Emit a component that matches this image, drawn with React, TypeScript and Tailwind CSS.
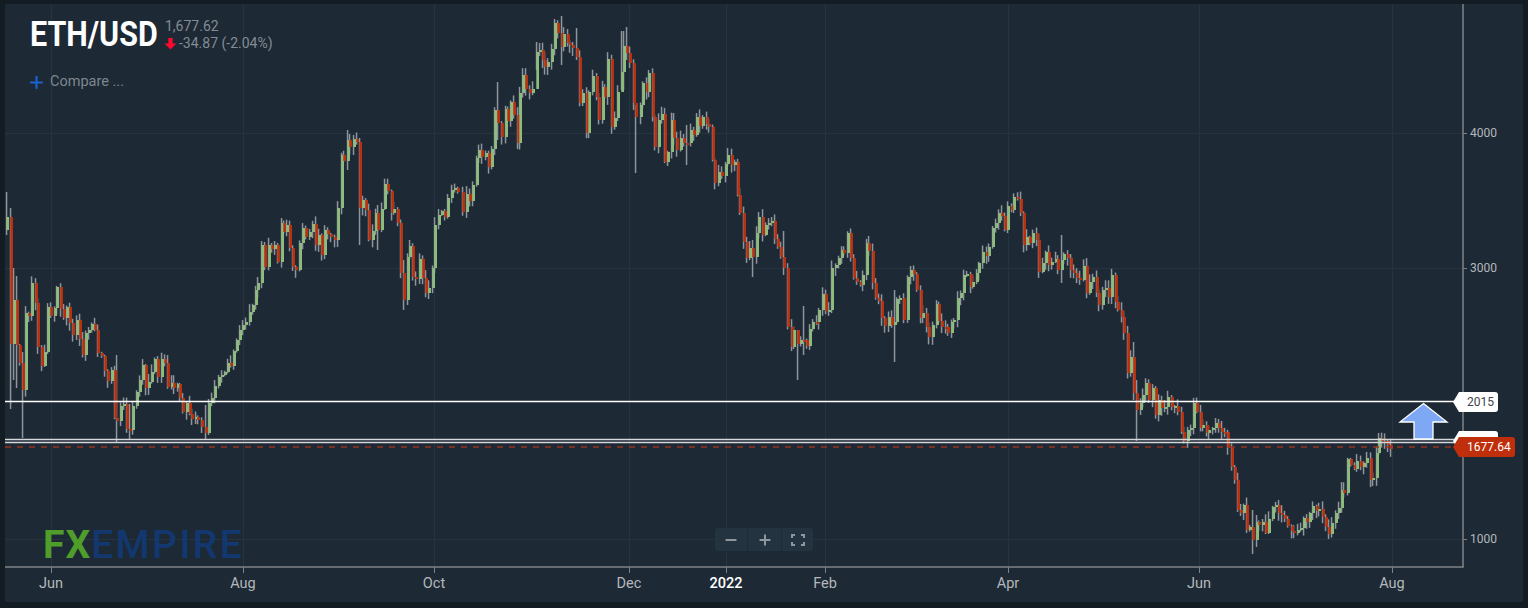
import { Minus, Plus } from "lucide-react";

// close of each candle in screen coords: "x,y"
const closes = `7,217 11,344 14,300 17,345 20,363 23,390 26,313 29,316 32,283 36,303 38,347 42,366 45,352 48,307 51,316 55,308 57,287 61,309 64,318 67,307 70,323 73,335 77,320 80,339 83,355 86,333 89,330 92,324 95,330 98,353 102,356 105,371 108,381 112,370 115,418 117,421 121,406 124,404 127,429 130,430 133,406 137,392 140,380 143,365 146,388 149,382 152,372 155,359 158,377 162,359 165,363 168,387 172,383 174,388 178,384 180,398 183,412 187,403 190,414 192,419 196,417 198,420 202,427 206,433 209,403 212,398 215,386 219,377 222,375 225,372 228,363 231,366 234,351 237,340 240,330 243,325 246,322 250,312 253,305 256,290 258,283 262,245 265,267 269,245 272,249 275,245 278,262 282,223 284,232 287,225 290,248 293,267 296,270 300,243 303,228 306,237 310,232 313,224 316,245 319,235 322,255 325,230 328,234 331,237 335,240 338,208 342,155 344,161 348,140 350,147 354,139 357,142 360,208 363,200 366,210 369,240 373,231 376,213 378,230 382,209 385,184 388,191 392,213 394,209 398,223 401,273 404,300 408,257 410,246 413,277 416,279 420,259 423,278 426,293 429,288 433,268 435,225 439,215 442,211 445,217 448,198 452,190 455,188 458,192 463,212 467,194 470,201 473,185 477,158 479,150 482,157 486,153 489,167 492,149 495,110 498,123 502,137 506,109 508,121 511,102 514,115 518,143 520,93 523,75 526,89 530,93 533,89 537,52 540,50 543,60 545,67 548,62 552,49 555,23 558,33 562,47 564,34 568,43 570,45 573,48 577,57 580,103 583,93 587,133 589,92 593,76 597,97 599,120 603,87 605,97 608,59 612,127 615,118 618,92 622,72 624,46 627,53 630,63 634,103 636,117 641,105 643,83 647,92 649,73 653,117 655,147 659,120 662,114 665,162 668,152 672,120 674,138 677,150 681,138 684,143 687,143 691,130 694,135 697,117 700,126 703,117 707,124 709,127 713,160 715,183 719,172 722,176 726,164 728,155 732,165 735,162 738,195 740,213 744,242 747,258 750,248 753,257 757,233 759,217 763,235 766,225 769,223 772,221 775,239 778,247 781,257 784,268 788,327 792,347 794,330 798,344 801,340 804,340 807,346 810,329 813,322 817,322 819,310 823,294 826,311 829,310 832,268 836,265 839,258 842,250 844,253 848,233 851,258 854,278 857,282 861,285 863,275 867,243 869,251 873,283 876,298 879,301 882,318 885,326 889,317 892,325 895,322 897,299 900,298 904,320 908,277 911,270 914,274 917,290 921,318 923,313 927,327 929,337 933,325 937,304 939,321 942,327 946,327 948,333 952,322 954,320 958,298 961,293 964,275 967,274 971,287 973,282 977,273 979,263 983,252 987,256 989,247 993,228 996,223 999,213 1002,216 1005,230 1008,206 1012,210 1014,197 1018,199 1021,213 1024,245 1027,237 1030,243 1033,233 1037,240 1039,272 1043,263 1046,252 1049,265 1052,262 1056,259 1058,270 1062,260 1064,254 1068,258 1071,270 1074,273 1077,278 1080,280 1084,266 1087,293 1090,282 1093,277 1097,293 1099,305 1103,290 1106,288 1109,297 1112,275 1116,302 1118,310 1122,317 1124,333 1128,373 1131,357 1134,393 1137,410 1141,403 1143,395 1146,383 1149,400 1153,388 1156,415 1159,400 1162,408 1165,407 1168,397 1172,407 1175,406 1178,412 1182,432 1184,441 1188,430 1191,428 1194,403 1197,412 1201,428 1203,425 1207,433 1209,430 1213,428 1216,423 1219,428 1222,432 1225,432 1228,448 1232,467 1235,480 1238,510 1241,513 1244,505 1247,530 1250,527 1253,540 1257,522 1259,525 1263,522 1266,533 1269,519 1273,507 1276,505 1279,513 1282,515 1285,519 1288,526 1292,531 1294,533 1298,530 1301,528 1304,518 1307,522 1310,513 1313,506 1317,511 1319,509 1323,517 1326,527 1329,534 1332,523 1336,513 1339,508 1342,490 1344,493 1348,459 1351,465 1355,469 1357,461 1361,467 1364,463 1367,458 1371,480 1373,478 1377,453 1379,438 1382,441 1385,441 1388,445 1391,449`;

// wicks that stick out in the picture: [x, high, low]
const longWicks: [number, number, number][] = [
  [7, 192, 235], [11, 208, 409], [14, 268, 380], [17, 276, 388], [23, 352, 438], [117, 355, 442], [129, 404, 440], [206, 405, 440],
  [347, 130, 170], [354, 135, 155], [359, 138, 245], [378, 205, 250], [403, 260, 310], [498, 82, 140], [538, 42, 70], [561, 16, 65],
  [576, 28, 60], [623, 31, 90], [627, 27, 60], [636, 105, 173], [686, 125, 165], [752, 240, 277], [783, 231, 275], [797, 330, 380],
  [803, 306, 355], [895, 290, 362], [1062, 235, 283], [1134, 342, 400], [1137, 380, 441], [1253, 510, 554], [1257, 515, 547], [1379, 433, 455],
];

const points = closes.split(" ").map((p) => p.split(",").map(Number));

let seed = 17;
function rand() {
  seed = (seed * 16807) % 2147483647;
  return seed / 2147483647;
}

const candles = points.map(([x, close], i) => {
  const open = i === 0 ? 230 : points[i - 1][1];
  const wick = longWicks.find((w) => Math.abs(w[0] - x) < 1.6);
  const high = wick ? wick[1] : Math.min(open, close) - 1 - rand() * 7;
  const low = wick ? wick[2] : Math.max(open, close) + 1 + rand() * 7;
  return { x, open, close, high, low };
});

const gridX = [51, 243, 434, 629, 726, 825, 1008, 1199, 1392];
const gridY = [133, 268, 539];

const timeLabels = [
  { text: "Jun", cls: "left-[46px] text-[#b4b8bc]" },
  { text: "Aug", cls: "left-[238px] text-[#b4b8bc]" },
  { text: "Oct", cls: "left-[429px] text-[#b4b8bc]" },
  { text: "Dec", cls: "left-[624px] text-[#b4b8bc]" },
  { text: "2022", cls: "left-[721px] text-white font-medium" },
  { text: "Feb", cls: "left-[820px] text-[#b4b8bc]" },
  { text: "Apr", cls: "left-[1003px] text-[#b4b8bc]" },
  { text: "Jun", cls: "left-[1194px] text-[#b4b8bc]" },
  { text: "Aug", cls: "left-[1387px] text-[#b4b8bc]" },
];

const priceLabels = [
  { text: "4000", cls: "top-[120px]" },
  { text: "3000", cls: "top-[255px]" },
  { text: "1000", cls: "top-[526px]" },
];

function Chart() {
  return (
    <svg width={1518} height={598} viewBox="5 4 1518 598" className="block">
      {gridX.map((x) => (
        <line key={x} x1={x + 0.5} x2={x + 0.5} y1={4} y2={567} stroke="#25343f" />
      ))}
      {gridY.map((y) => (
        <line key={y} x1={5} x2={1463} y1={y + 0.5} y2={y + 0.5} stroke="#25343f" />
      ))}
      {candles.map((c) => (
        <rect key={c.x} x={c.x - 1.2} y={c.high} width={1.5} height={c.low - c.high} fill="#8f959a" />
      ))}
      {candles.map((c) => (
        <rect
          key={c.x}
          x={c.x - 0.7}
          y={Math.min(c.open, c.close)}
          width={2.7}
          height={Math.max(Math.abs(c.close - c.open), 2)}
          fill={c.close < c.open ? "#8dbd7c" : "#b9300f"}
        />
      ))}
      <line x1={5} x2={1463} y1={401.5} y2={401.5} stroke="#ffffff" strokeWidth={1.5} />
      <line x1={5} x2={1463} y1={439.5} y2={439.5} stroke="#d5d8da" strokeWidth={1.6} />
      <line x1={5} x2={1463} y1={442.5} y2={442.5} stroke="#d5d8da" strokeWidth={1.6} />
      <line x1={5} x2={1463} y1={447} y2={447} stroke="#9c3220" strokeWidth={1.5} strokeDasharray="6 6" />
      <polygon
        points="1423.5,403.5 1447,422 1433,422 1433,439 1414,439 1414,422 1400,422"
        fill="#7fa8f4"
        stroke="#ffffff"
        strokeWidth={1.3}
      />
      <line x1={1463} x2={1463} y1={4} y2={567.5} stroke="#7f8386" strokeWidth={1.5} />
      <line x1={5} x2={1463.5} y1={567} y2={567} stroke="#7f8386" strokeWidth={1.5} />
      {gridX.map((x) => (
        <line key={x} x1={x + 0.5} x2={x + 0.5} y1={567} y2={573} stroke="#7f8386" />
      ))}
      {gridY.map((y) => (
        <line key={y} x1={1463} x2={1467} y1={y + 0.5} y2={y + 0.5} stroke="#7f8386" />
      ))}
    </svg>
  );
}

function PriceTag({ text, cls, bg, tip }: { text: string; cls: string; bg: string; tip: string }) {
  return (
    <div className={`absolute flex items-center ${cls}`}>
      <span className={`w-0 h-0 border-y-[10px] border-y-transparent border-r-[6px] ${tip}`} />
      <span className={`h-[20px] leading-[20px] rounded-r-[3px] text-[12px] ${bg}`}>{text}</span>
    </div>
  );
}

export default function App() {
  return (
    <div className="w-[1528px] h-[608px] bg-[#131c23] pt-[4px] pl-[5px] pr-[5px] pb-[6px] overflow-hidden font-['Roboto',sans-serif]">
      <div className="relative h-full bg-[#1d2935]">
        <Chart />

        <div className="absolute left-[25px] top-[12px] flex flex-col">
          <div className="flex items-center">
            <h1 className="w-[128px] origin-left scale-x-[0.87] text-[35px] leading-[38px] font-bold text-white whitespace-nowrap">
              ETH/USD
            </h1>
            <div className="ml-[7px] flex flex-col text-[14px] leading-[17px] text-[#848c93]">
              <span>1,677.62</span>
              <span className="flex items-center">
                <svg width="13" height="13" viewBox="0 0 12 12" className="mr-[2px] -ml-[1px] text-[#ff0a2e]">
                  <path d="M4 1h4v5h3.5L6 11.5.5 6H4z" fill="currentColor" />
                </svg>
                <span className="whitespace-nowrap">-34.87 (-2.04%)</span>
              </span>
            </div>
          </div>
          <div className="mt-[18px] flex items-center text-[14.5px] leading-[20px] text-[#7d868e]">
            <Plus size={19} strokeWidth={2.8} className="mr-[4px] -ml-[3px] text-[#1a62d0]" />
            <span>Compare ...</span>
          </div>
        </div>

        <div className="absolute left-[38px] top-[523px] flex items-center text-[39px] leading-[36px] whitespace-nowrap">
          <span className="font-bold tracking-[1px] text-[#4f9e2a]">FX</span>
          <span className="font-medium tracking-[2.4px] text-[#12386f]">EMPIRE</span>
        </div>

        <div className="absolute left-[710px] top-[524px] flex h-[23px] w-[98px] rounded-[3px] bg-[#243340] text-[#8e979e]">
          <button className="flex w-[33px] items-center justify-center border-r border-[#1f2c37]">
            <Minus size={16} strokeWidth={3} />
          </button>
          <button className="flex w-[34px] items-center justify-center border-r border-[#1f2c37]">
            <Plus size={16} strokeWidth={3} />
          </button>
          <button className="flex w-[31px] items-center justify-center">
            <svg width="14" height="12" viewBox="0 0 14 12" fill="none" stroke="currentColor" strokeWidth="2">
              <path d="M1 4V1h3M10 1h3v3M13 8v3h-3M4 11H1V8" />
            </svg>
          </button>
        </div>

        {timeLabels.map((l) => (
          <span
            key={l.cls}
            className={`absolute top-[570px] -translate-x-1/2 text-[14.5px] leading-[20px] ${l.cls}`}
          >
            {l.text}
          </span>
        ))}

        {priceLabels.map((l) => (
          <span key={l.text} className={`absolute left-[1465px] text-[12px] leading-[18px] text-[#b4b8bc] ${l.cls}`}>
            {l.text}
          </span>
        ))}

        <PriceTag text="2015" cls="left-[1448px] top-[388px]" bg="w-[39px] pl-[8px] bg-white text-[#3c444b]" tip="border-r-white" />
        <PriceTag text="" cls="left-[1448px] top-[427px]" bg="w-[39px] bg-white" tip="border-r-white" />
        <PriceTag text="1677.64" cls="left-[1448px] top-[433px]" bg="w-[56px] pl-[8px] bg-[#bf2f0b] text-white" tip="border-r-[#bf2f0b]" />
      </div>
    </div>
  );
}
